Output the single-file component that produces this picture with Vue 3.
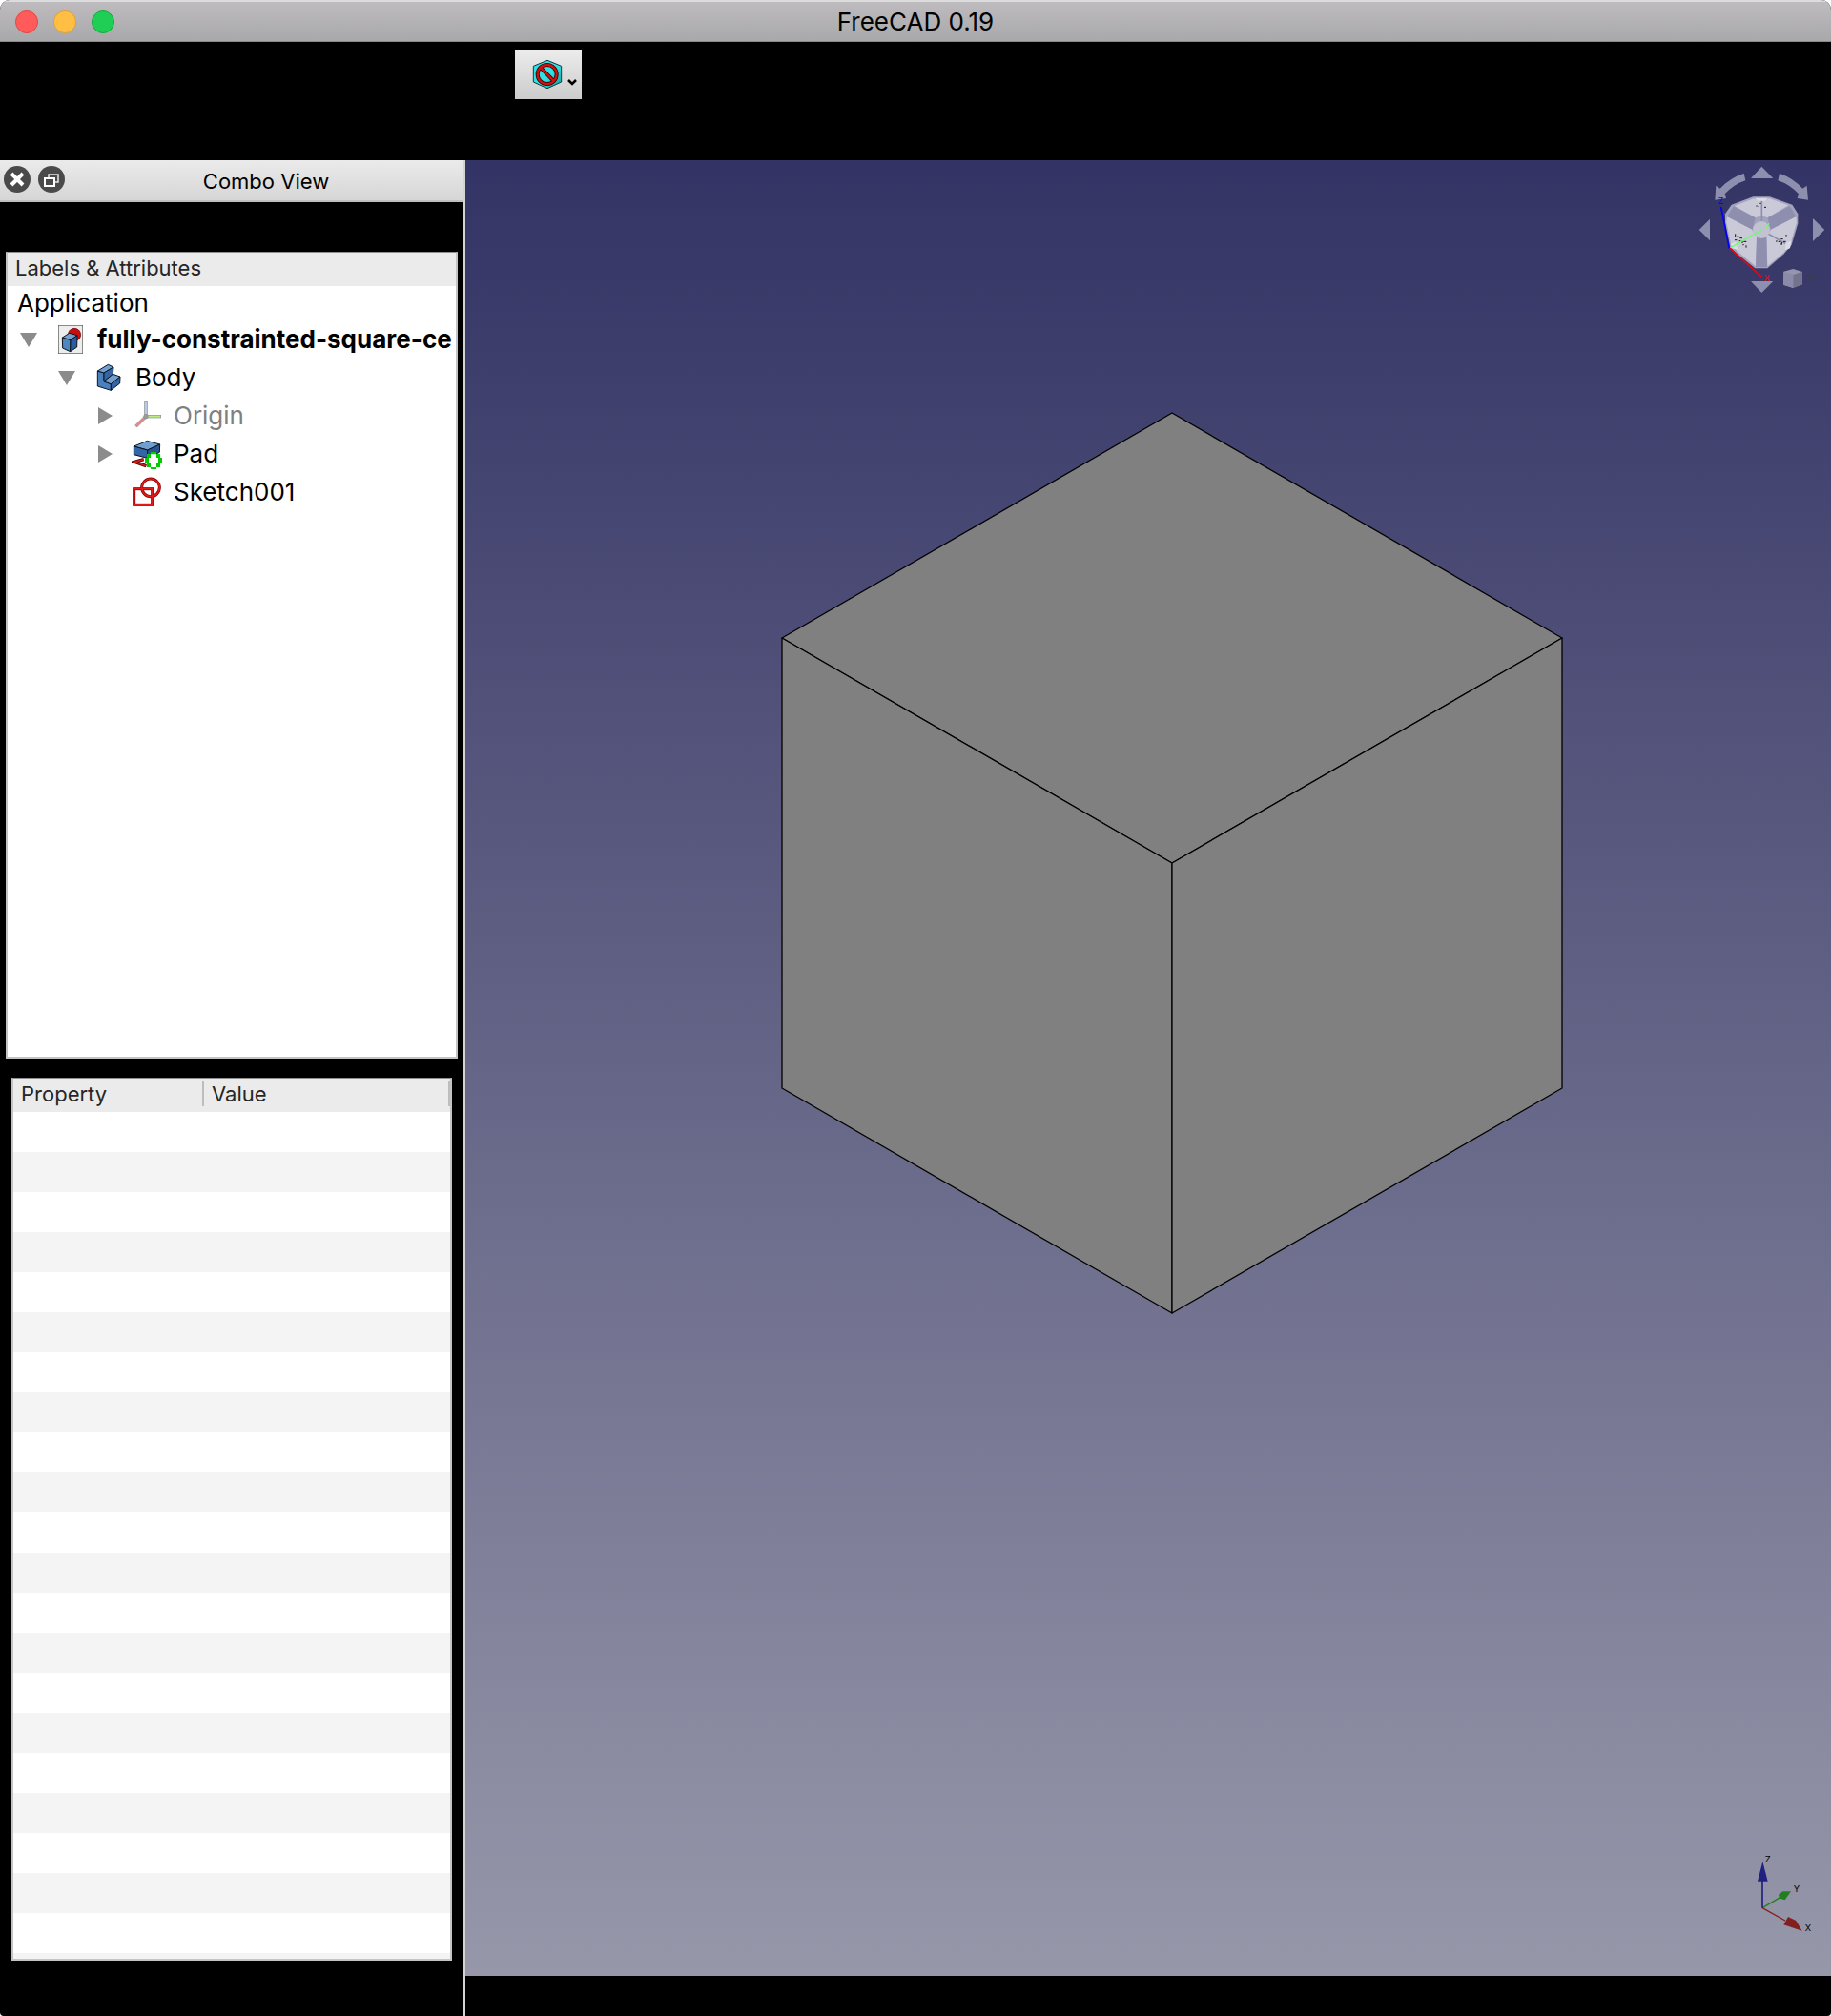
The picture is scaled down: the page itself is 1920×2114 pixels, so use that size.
<script setup>
const emptyRows = 22
</script>

<template>
  <div class="window">
    <header class="titlebar">
      <div class="lights">
        <button class="light close" aria-label="Close window"></button>
        <button class="light minimize" aria-label="Minimize window"></button>
        <button class="light zoom" aria-label="Zoom window"></button>
      </div>
      <h1 class="title">FreeCAD 0.19</h1>
    </header>

    <div class="toolbar">
      <button class="tool" aria-label="Draw style">
        <svg class="tool-icon" viewBox="0 0 96 96" aria-hidden="true">
          <defs>
            <linearGradient id="cyan" x1="0" y1="0" x2="1" y2="1">
              <stop offset="0" stop-color="#2adfe6" />
              <stop offset="0.55" stop-color="#34e0e2" />
              <stop offset="1" stop-color="#06989a" />
            </linearGradient>
          </defs>
          <path d="M48 4 92 22V72L48 92 4 72V22Z" fill="url(#cyan)" stroke="#12393c" stroke-width="3" />
          <g fill="none" stroke="#280000" stroke-width="12">
            <circle cx="47" cy="48" r="30" />
            <path d="M26 26 69 70" />
          </g>
          <g fill="none" stroke="#cc1111" stroke-width="7">
            <circle cx="47" cy="48" r="30" />
            <path d="M26 26 69 70" />
          </g>
        </svg>
        <svg class="tool-arrow" viewBox="0 0 10 8" aria-hidden="true">
          <path d="M1 2 5 6 9 2" fill="none" stroke="#000" stroke-width="2.5" />
        </svg>
      </button>
    </div>

    <main class="workspace">
      <aside class="dock">
        <div class="dock-title">
          <button class="dock-button" aria-label="Close panel">
            <svg viewBox="0 0 28 28" aria-hidden="true">
              <circle cx="14" cy="14" r="14" fill="#4a4a4a" />
              <path d="M8 8 20 20M20 8 8 20" stroke="#fff" stroke-width="4" />
            </svg>
          </button>
          <button class="dock-button" aria-label="Float panel">
            <svg viewBox="0 0 28 28" aria-hidden="true">
              <circle cx="14" cy="14" r="14" fill="#4a4a4a" />
              <path d="M11 12V9H21V17H18" fill="none" stroke="#e8e8e8" stroke-width="1.5" />
              <rect x="7" y="13" width="10" height="8" fill="#4a4a4a" stroke="#fff" stroke-width="2" />
            </svg>
          </button>
          <h2 class="dock-name">Combo View</h2>
        </div>

        <section class="tree">
          <div class="tree-head">Labels &amp; Attributes</div>
          <div class="tree-root">Application</div>
          <ul class="nodes">
            <li class="node depth-0">
              <button class="toggle" aria-label="Collapse document">
                <svg viewBox="0 0 18 18" aria-hidden="true"><path d="M0 2H18L9 17Z" fill="#8b8b8b" /></svg>
              </button>
              <svg class="node-icon" viewBox="0 0 96 96" aria-hidden="true">
                <rect x="10" y="4" width="76" height="88" fill="#ededed" stroke="#555753" stroke-width="2" />
                <circle cx="60" cy="33" r="20" fill="#cc0d0d" stroke="#5c0000" stroke-width="2" />
                <g stroke="#0b1521" stroke-width="3" stroke-linejoin="round">
                  <path d="M22 42 44 28 69 35 48 50Z" fill="#729fcf" />
                  <path d="M22 42 48 50 47 86 23 75Z" fill="#4f86c0" />
                  <path d="M48 50 69 35 68 72 47 86Z" fill="#2c5c9b" />
                </g>
              </svg>
              <strong class="label">fully-constrainted-square-ce</strong>
            </li>
            <li class="node depth-1">
              <button class="toggle" aria-label="Collapse Body">
                <svg viewBox="0 0 18 18" aria-hidden="true"><path d="M0 2H18L9 17Z" fill="#8b8b8b" /></svg>
              </button>
              <svg class="node-icon" viewBox="0 0 96 96" aria-hidden="true">
                <g stroke="#0b1521" stroke-width="3" stroke-linejoin="round">
                  <path d="M13 27 33 33 33 60 55 68 55 88 13 75Z" fill="#4a80bd" />
                  <path d="M13 27 46 7 63 15 33 33Z" fill="#729fcf" />
                  <path d="M33 33 63 15 61 37 33 60Z" fill="#3465a4" />
                  <path d="M33 60 61 37 84 45 55 68Z" fill="#729fcf" />
                  <path d="M55 68 84 45 83 66 55 88Z" fill="#3465a4" />
                </g>
              </svg>
              <span class="label">Body</span>
            </li>
            <li class="node depth-2">
              <button class="toggle" aria-label="Expand Origin">
                <svg viewBox="0 0 18 18" aria-hidden="true"><path d="M2 0V18L17 9Z" fill="#8b8b8b" /></svg>
              </button>
              <svg class="node-icon" viewBox="0 0 96 96" aria-hidden="true">
                <g stroke="#8c8c8c" stroke-width="2">
                  <rect x="41" y="4" width="8" height="46" fill="#b5cce8" />
                  <rect x="48" y="46" width="44" height="8" fill="#bdeb83" />
                  <path d="M40 49 46 55 17 84 11 78Z" fill="#e58a8a" />
                  <circle cx="45" cy="50" r="7" fill="#9a9c98" />
                </g>
              </svg>
              <span class="label muted">Origin</span>
            </li>
            <li class="node depth-2">
              <button class="toggle" aria-label="Expand Pad">
                <svg viewBox="0 0 18 18" aria-hidden="true"><path d="M2 0V18L17 9Z" fill="#8b8b8b" /></svg>
              </button>
              <svg class="node-icon" viewBox="0 0 96 96" aria-hidden="true">
                <path d="M38 65 9 73 46 86" fill="none" stroke="#4b0000" stroke-width="10" />
                <path d="M38 65 10 73 46 86" fill="none" stroke="#d81b1b" stroke-width="5" />
                <g stroke="#0b1521" stroke-width="3" stroke-linejoin="round">
                  <path d="M7 24 49 7 89 18 50 36Z" fill="#729fcf" />
                  <path d="M7 24 50 36 49 61 7 50Z" fill="#3465a4" />
                  <path d="M50 36 89 18 88 43 49 61Z" fill="#2c5590" />
                </g>
                <path d="M60 42H78V48H90V60H96V78H90V90H78V96H60V90H48V78H42V60H48V48H60Z" fill="#00cc00" />
                <path d="M60 49H78V60H84V78H78V90H60V78H54V60H60Z" fill="#fff" />
              </svg>
              <span class="label">Pad</span>
            </li>
            <li class="node depth-2">
              <span class="toggle"></span>
              <svg class="node-icon" viewBox="0 0 96 96" aria-hidden="true">
                <g fill="none" stroke="#8a0000" stroke-width="9">
                  <rect x="8" y="38" width="57" height="50" />
                  <circle cx="60" cy="34" r="28" />
                </g>
                <g fill="none" stroke="#e01b1b" stroke-width="5">
                  <rect x="8" y="38" width="57" height="50" />
                  <circle cx="60" cy="34" r="28" />
                </g>
              </svg>
              <span class="label">Sketch001</span>
            </li>
          </ul>
        </section>

        <section class="properties">
          <table class="grid">
            <thead>
              <tr>
                <th class="col-property" scope="col"><span class="cell">Property</span></th>
                <th scope="col"><span class="cell">Value</span></th>
              </tr>
            </thead>
            <tbody>
              <tr v-for="n in emptyRows" :key="n">
                <td></td>
                <td></td>
              </tr>
            </tbody>
          </table>
        </section>
      </aside>

      <section class="viewport">
        <svg class="solid" viewBox="0 0 820 946" aria-label="Pad solid">
          <g fill="#808080" stroke="#000" stroke-width="1.3" stroke-linejoin="round">
            <path d="M409 1 818 237 409 473 0 237Z" />
            <path d="M0 237 409 473V945L0 709Z" />
            <path d="M409 473 818 237V709L409 945Z" />
          </g>
        </svg>

        <svg class="navcube" viewBox="0 9 450 441" aria-label="Navigation cube">
          <g fill="#8e8eae">
            <path d="M232 29 268 66H198Z" />
            <path d="M232 426 268 390H198Z" />
            <path d="M35 228 69 194V262Z" />
            <path d="M430 228 393 192V264Z" />
            <path d="M176 50 181 73Q146 84 116 115L120 129 85 134 88 89 101 98Q130 66 176 50Z" />
            <path d="M288 50 283 73Q318 84 348 115L344 129 378 134 374 89 361 98Q332 66 288 50Z" />
          </g>
          <path d="M205 124H257L328 149 346 178V208L326 275 302 304 250 349H211L158 306 133 283 117 205V178L137 149Z" fill="#a3a3bf" />
          <g fill="#c9c9d8">
            <path d="M206 130 230 137 255 129 316 151 251 190 231 184 212 190 146 153Z" />
            <path d="M123 186 200 226 217 252 213 343 156 296 134 266 121 205Z" />
            <path d="M340 186 262 226 247 251 250 343 302 299 324 266 342 205Z" />
          </g>
          <path d="M144 154 212 190 203 227 123 186 137 165ZM319 154 251 190 260 227 340 186 328 165ZM216 250H247L249 345H213Z" fill="#8e8eae" />
          <path d="M232 137V208M248 238 308 272" stroke="#8e8eae" stroke-width="5" />
          <circle cx="231" cy="228" r="27" fill="#c2c2d2" />
          <path d="M210 128H251L242 137H220ZM134 271 151 266 156 290 138 286ZM307 270 326 262 321 286 306 292Z" fill="#dcdce6" />
          <path d="M214 153h4M226 145h4M240 157h6M221 155h3M149 241v8M154 249h6M147 260h7M163 254h8M161 263h5M171 262v8M175 265h9M172 275h4M183 277v7M309 243v5M292 257h7M284 265h8M300 265h8M289 273h4M276 264h5M295 267v8" stroke="#111" stroke-width="3" fill="none" />
          <path d="M104 156 130 287" stroke="#0000ff" stroke-width="5" />
          <path d="M133 285 231 228" stroke="#66ff66" stroke-width="4" />
          <path d="M131 286 231 375" stroke="#ff0000" stroke-width="4" />
          <text x="95" y="146" fill="#0000ff">Z</text>
          <text x="240" y="227" fill="#77f577">Y</text>
          <text x="239" y="390" fill="#ff0000">X</text>
          <path d="M301 359 331 351 360 360V400L330 411 300 401Z" fill="#9595af" />
          <path d="M301 360 331 369V410L300 401Z" fill="#8b8ba9" />
          <path d="M331 369 360 360V400L331 410Z" fill="#73738e" />
          <path d="M372 373H408L390 390Z" fill="#3b3b54" />
        </svg>

        <svg class="axes" viewBox="0 0 300 330" aria-label="Axis cross">
          <path d="M84 212 140 179" stroke="#208020" stroke-width="4" />
          <path d="M174 160 148 160 135 170 138 182 155 187Z" fill="#208020" />
          <path d="M84 212 156 252" stroke="#802020" stroke-width="4" />
          <path d="M209 284 190 252 165 240 151 265Z" fill="#802020" />
          <path d="M84 212V126" stroke="#202080" stroke-width="5" />
          <path d="M85 66 101 128H69Z" fill="#202080" />
          <text x="92" y="68">Z</text>
          <text x="182" y="161">Y</text>
          <text x="218" y="284">X</text>
        </svg>
      </section>
    </main>
  </div>
</template>

<style>
body {
  margin: 0;
  background: #fff;
}
</style>

<style scoped>
* {
  box-sizing: border-box;
}

button {
  padding: 0;
  border: 0;
  background: none;
}

svg {
  display: block;
}

.window {
  display: flex;
  flex-direction: column;
  height: 100vh;
  overflow: hidden;
  border-radius: 10px 10px 4px 4px;
  background: #000;
  color: #000;
  font-family: Inter, "Liberation Sans", sans-serif;
}

.titlebar {
  display: grid;
  grid-template-columns: 1fr auto 1fr;
  align-items: center;
  flex: none;
  height: 44px;
  padding: 0 16px;
  border-top: 2px solid #dddcdd;
  border-bottom: 1px solid #8b8a8b;
  background: linear-gradient(#bebcbe, #a8a7a9);
}

.lights {
  display: flex;
  gap: 16px;
}

.light {
  width: 24px;
  height: 24px;
  border-radius: 50%;
}

.close {
  border: 1px solid #e2463f;
  background: #ff5b5a;
}

.minimize {
  border: 1px solid #e0a032;
  background: #ffbf45;
}

.zoom {
  border: 1px solid #12ac3a;
  background: #1fce55;
}

.title {
  margin: 0;
  font-size: 26px;
  font-weight: 400;
  line-height: 32px;
}

.toolbar {
  flex: none;
  height: 124px;
  padding: 8px 540px;
}

.tool {
  display: flex;
  align-items: center;
  gap: 5px;
  width: 70px;
  height: 52px;
  padding-left: 18px;
  background: linear-gradient(#ececec, #cccccc);
}

.tool-icon {
  width: 32px;
  height: 32px;
}

.tool-arrow {
  width: 10px;
  height: 8px;
  margin-top: 16px;
}

.workspace {
  display: flex;
  flex: 1;
  min-height: 0;
}

.dock {
  display: flex;
  flex-direction: column;
  flex: none;
  width: 488px;
  padding-bottom: 58px;
  border-right: 2px solid #d4d4d4;
}

.dock-title {
  display: flex;
  align-items: center;
  gap: 8px;
  flex: none;
  height: 44px;
  padding: 0 4px;
  border-bottom: 2px solid #c0c0c0;
  background: linear-gradient(#ebebeb, #d6d6d6);
}

.dock-button {
  width: 28px;
  height: 28px;
  margin-bottom: 2px;
}

.dock-name {
  flex: 1;
  margin: 2px 0 0;
  font-size: 22px;
  font-weight: 400;
  line-height: 32px;
  text-align: center;
}

.tree {
  flex: 846 1 0;
  min-height: 0;
  margin: 52px 6px 20px;
  overflow: hidden;
  border: 2px solid #c4c4c4;
  border-top: 1px solid #8f8f8f;
  background: #fff;
}

.tree-head {
  height: 35px;
  padding-left: 8px;
  background: #ebebeb;
  color: #262626;
  font-size: 22px;
  line-height: 32px;
}

.tree-root {
  padding-left: 10px;
  font-size: 26px;
  line-height: 36px;
}

.nodes {
  margin: 0;
  padding: 0;
  list-style: none;
}

.node {
  display: flex;
  align-items: center;
  gap: 12px;
  height: 40px;
  font-size: 26px;
  line-height: 40px;
  white-space: nowrap;
}

.depth-0 {
  padding-left: 6px;
}

.depth-1 {
  padding-left: 46px;
}

.depth-2 {
  padding-left: 86px;
}

.toggle {
  display: flex;
  justify-content: center;
  flex: none;
  width: 32px;
}

.toggle svg {
  width: 18px;
  height: 18px;
}

.node-icon {
  flex: none;
  width: 32px;
  height: 32px;
}

.muted {
  color: #808080;
}

.properties {
  flex: 926 1 0;
  min-height: 0;
  margin: 0 12px;
  overflow: hidden;
  border: 2px solid #c4c4c4;
  border-top: 1px solid #8f8f8f;
  background: #fff;
}

.grid {
  width: 100%;
  border-collapse: collapse;
  table-layout: fixed;
}

.grid th {
  height: 35px;
  padding: 3px 0 6px;
  background: #ebebeb;
  color: #262626;
  font-size: 22px;
  font-weight: 400;
  line-height: 26px;
  text-align: left;
}

.cell {
  display: block;
  padding-left: 8px;
  border-right: 2px solid #bdbdbd;
}

.grid .col-property {
  width: 200px;
}

.grid td {
  height: 42px;
  padding: 0;
}

.grid tbody tr:nth-child(even) {
  background: #f4f4f4;
}

.viewport {
  position: relative;
  flex: 1;
  margin-bottom: 42px;
  overflow: hidden;
  background: linear-gradient(#333365, #9797aa);
}

.solid {
  position: absolute;
  top: 264px;
  left: 332px;
  width: 820px;
  height: 946px;
  overflow: visible;
}

.navcube {
  position: absolute;
  top: 0;
  right: 0;
  width: 150px;
  height: 147px;
  font-size: 26px;
}

.axes {
  position: absolute;
  right: 0;
  bottom: 32px;
  width: 100px;
  height: 110px;
  font-size: 28px;
}
</style>
